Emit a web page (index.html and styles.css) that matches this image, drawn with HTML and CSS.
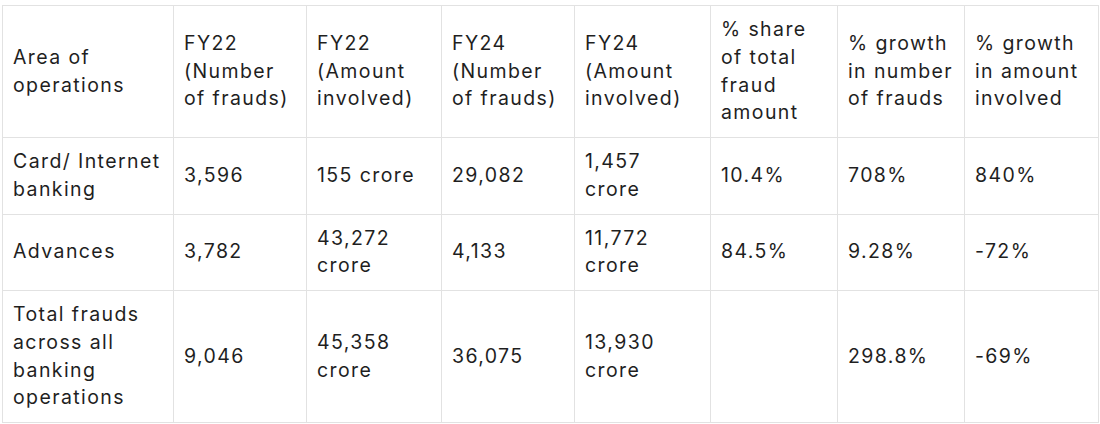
FILE: index.html
```html
<!DOCTYPE html>
<html>
<head>
<meta charset="utf-8">
<link rel="stylesheet" href="styles.css">
</head>
<body>
<table class="data">
  <colgroup>
    <col class="c1"><col class="c2"><col class="c3"><col class="c4"><col class="c5"><col class="c6"><col class="c7"><col class="c8">
  </colgroup>
  <tr>
    <td>Area of operations</td>
    <td>FY22 (Number of frauds)</td>
    <td>FY22 (Amount involved)</td>
    <td>FY24 (Number of frauds)</td>
    <td>FY24 (Amount involved)</td>
    <td>% share of total fraud amount</td>
    <td>% growth in number of frauds</td>
    <td>% growth in amount involved</td>
  </tr>
  <tr>
    <td>Card/ Internet banking</td>
    <td>3,596</td>
    <td>155 crore</td>
    <td>29,082</td>
    <td>1,457 crore</td>
    <td>10.4%</td>
    <td>708%</td>
    <td>840%</td>
  </tr>
  <tr>
    <td>Advances</td>
    <td>3,782</td>
    <td>43,272 crore</td>
    <td>4,133</td>
    <td>11,772 crore</td>
    <td>84.5%</td>
    <td>9.28%</td>
    <td>-72%</td>
  </tr>
  <tr>
    <td>Total frauds across all banking operations</td>
    <td>9,046</td>
    <td>45,358 crore</td>
    <td>36,075</td>
    <td>13,930 crore</td>
    <td></td>
    <td>298.8%</td>
    <td>-69%</td>
  </tr>
</table>
</body>
</html>
```
FILE: styles.css
```css
html, body {
  margin: 0;
  padding: 0;
  background: #ffffff;
}
body {
  padding: 5px 0 0 2px;
  font-family: Inter, "Noto Sans", sans-serif;
  color: #1f1f1f;
}
.data {
  border-collapse: collapse;
  table-layout: fixed;
  width: 1096px;
}
.c1 { width: 171px; }
.c2 { width: 133px; }
.c3 { width: 135px; }
.c4 { width: 133px; }
.c5 { width: 136px; }
.c6 { width: 127px; }
.c7 { width: 127px; }
.c8 { width: 134px; }
.data td {
  border: 1px solid #e2e2e2;
  padding: 10px;
  font-size: 19.5px;
  line-height: 27.75px;
  letter-spacing: 1.4px;
  vertical-align: middle;
  text-align: left;
}
```
